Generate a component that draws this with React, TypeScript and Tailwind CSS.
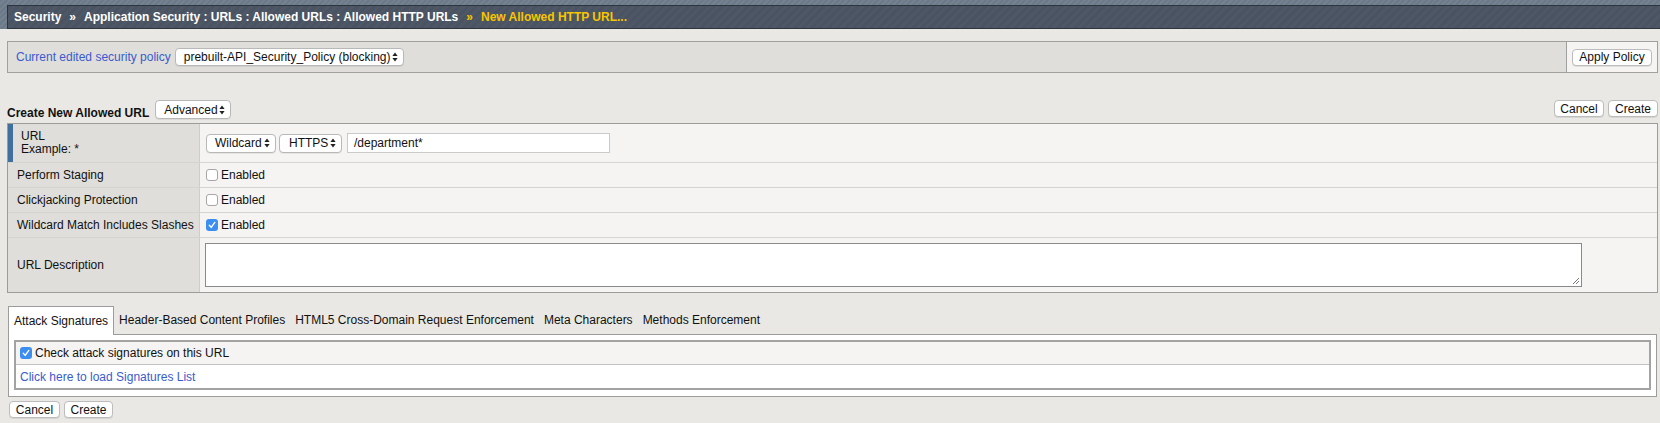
import React from 'react';

function Arrows() {
  return (
    <svg width="6" height="10" viewBox="0 0 6 10" className="shrink-0">
      <path d="M3 0.5 L5.6 4 L0.4 4 Z" fill="#222" />
      <path d="M3 9.5 L5.6 6 L0.4 6 Z" fill="#222" />
    </svg>
  );
}

function Select({ label, className }: { label: string; className: string }) {
  return (
    <div
      className={`flex items-center justify-between bg-white border border-[#b8b8b8] rounded-[4px] shadow-[0_1px_0_rgba(0,0,0,0.06)] pl-[8px] pr-[5px] text-[12px] text-[#111] ${className}`}
    >
      <span className="leading-none">{label}</span>
      <Arrows />
    </div>
  );
}

function Btn({ children, className }: { children: React.ReactNode; className: string }) {
  return (
    <button
      className={`h-[17px] bg-white border border-[#bcbcbc] rounded-[4px] shadow-[0_1px_0_rgba(0,0,0,0.08)] text-[12px] leading-none text-[#111] flex items-center justify-center ${className}`}
    >
      {children}
    </button>
  );
}

function Check({ checked }: { checked?: boolean }) {
  if (checked) {
    return (
      <span className="w-[12px] h-[12px] rounded-[3px] bg-[#3b8ef0] flex items-center justify-center shrink-0">
        <svg width="8" height="8" viewBox="0 0 8 8">
          <path d="M1.3 4.3 L3.2 6.4 L6.8 1.4" stroke="#fff" strokeWidth="1.4" fill="none" strokeLinecap="round" strokeLinejoin="round" />
        </svg>
      </span>
    );
  }
  return <span className="w-[12px] h-[12px] rounded-[3px] bg-white border border-[#a6a6a6] shrink-0" />;
}

const labelCell = 'w-[192px] shrink-0 bg-[#dfdedb] border-r border-[#cfcdca] flex items-center';
const valueCell = 'flex-1 bg-[#f5f4f2] flex items-center pl-[6px]';

function CheckRow({ label, checked }: { label: string; checked?: boolean }) {
  return (
    <div className="flex h-[25px] border-b border-[#d6d4d1]">
      <div className={`${labelCell} pl-[9px]`}>{label}</div>
      <div className={`${valueCell} gap-[3px]`}>
        <Check checked={checked} />
        <span>Enabled</span>
      </div>
    </div>
  );
}

export default function App() {
  const tabs = [
    'Header-Based Content Profiles',
    'HTML5 Cross-Domain Request Enforcement',
    'Meta Characters',
    'Methods Enforcement',
  ];

  return (
    <div className="w-[1660px] h-[423px] overflow-hidden bg-[#e9e8e4] font-['Liberation_Sans',Arial,sans-serif] text-[12px] text-[#111]">
      {/* breadcrumb header */}
      <div className="h-[29px] pt-[5px] pl-[7px] bg-[repeating-linear-gradient(135deg,#6c7988_0px,#6c7988_2px,#74818f_2px,#74818f_4px)]">
        <div className="h-[24px] border-t border-b border-l border-[#2d343d] bg-[repeating-linear-gradient(135deg,#4a5361_0px,#4a5361_3px,#4e5765_3px,#4e5765_6px)] flex items-center pl-[6px] font-bold text-white whitespace-nowrap">
          <span>Security</span>
          <span className="mx-[8px]">»</span>
          <span>Application Security : URLs : Allowed URLs : Allowed HTTP URLs</span>
          <span className="mx-[8px] text-[#f7c600]">»</span>
          <span className="text-[#f7c600]">New Allowed HTTP URL...</span>
        </div>
      </div>

      <div className="pl-[7px] pr-[2px]">
        {/* policy bar */}
        <div className="mt-[12px] h-[32px] flex border border-[#a0a09e] bg-[#dfdedb]">
          <div className="flex-1 flex items-center pl-[8px]">
            <span className="text-[#3a5bcd]">Current edited security policy</span>
            <Select label="prebuilt-API_Security_Policy (blocking)" className="ml-[4px] w-[229px] h-[18px]" />
          </div>
          <div className="w-[91px] border-l border-[#a0a09e] bg-[#f5f4f2] flex items-center pl-[5px]">
            <Btn className="w-[80px]">Apply Policy</Btn>
          </div>
        </div>

        {/* title row */}
        <div className="mt-[27px] h-[23px] flex justify-between items-start">
          <div className="flex items-start">
            <span className="mt-[6px] leading-[14px] font-bold">Create New Allowed URL</span>
            <Select label="Advanced" className="ml-[6px] w-[76px] h-[19px]" />
          </div>
          <div className="flex gap-[4px]">
            <Btn className="w-[50px]">Cancel</Btn>
            <Btn className="w-[50px]">Create</Btn>
          </div>
        </div>

        {/* properties table */}
        <div className="border border-[#9c9c9a]">
          <div className="flex h-[39px] border-b border-[#d6d4d1]">
            <div className={`${labelCell}`}>
              <div className="w-[5px] h-full bg-[#41709f]" />
              <div className="pl-[8px] leading-[13px]">
                <div>URL</div>
                <div>Example: *</div>
              </div>
            </div>
            <div className={`${valueCell} gap-[3px]`}>
              <Select label="Wildcard" className="w-[70px] h-[19px]" />
              <Select label="HTTPS" className="w-[63px] h-[19px] pl-[9px]" />
              <div className="ml-[2px] w-[263px] h-[20px] bg-white border border-[#cacaca] flex items-center pl-[6px]">
                /department*
              </div>
            </div>
          </div>
          <CheckRow label="Perform Staging" />
          <CheckRow label="Clickjacking Protection" />
          <CheckRow label="Wildcard Match Includes Slashes" checked />
          <div className="flex h-[54px]">
            <div className={`${labelCell} pl-[9px]`}>URL Description</div>
            <div className="flex-1 bg-[#f5f4f2] pt-[5px] pl-[5px]">
              <div className="relative w-[1377px] h-[44px] bg-white border border-[#8a8a8a]">
                <svg width="8" height="8" viewBox="0 0 8 8" className="absolute right-[1px] bottom-[1px]">
                  <path d="M7 1 L1 7 M7 4 L4 7" stroke="#777" strokeWidth="1" />
                </svg>
              </div>
            </div>
          </div>
        </div>

        {/* tabs */}
        <div className="ml-[1px] mr-[1px]">
          <div className="mt-[13px] h-[28px] flex items-end">
            <div className="h-[29px] -mb-px relative z-10 bg-white border border-b-0 border-[#9c9c9a] px-[5px] flex items-center">
              Attack Signatures
            </div>
            {tabs.map((t) => (
              <div key={t} className="h-[28px] px-[5px] flex items-center">
                {t}
              </div>
            ))}
          </div>
          <div className="border border-[#9c9c9a] bg-white pt-[5px] pb-[6px] px-[5px]">
            <div className="border-2 border-[#a3a3a3]">
              <div className="h-[23px] bg-[#f5f4f2] border-b border-[#c2c2c2] flex items-center pl-[4px] gap-[3px]">
                <Check checked />
                <span>Check attack signatures on this URL</span>
              </div>
              <div className="h-[23px] bg-white flex items-center pl-[4px] text-[#3a5bcd]">
                Click here to load Signatures List
              </div>
            </div>
          </div>
        </div>

        <div className="mt-[4px] flex gap-[4px] pl-[2px]">
          <Btn className="w-[51px]">Cancel</Btn>
          <Btn className="w-[49px]">Create</Btn>
        </div>
      </div>
    </div>
  );
}
